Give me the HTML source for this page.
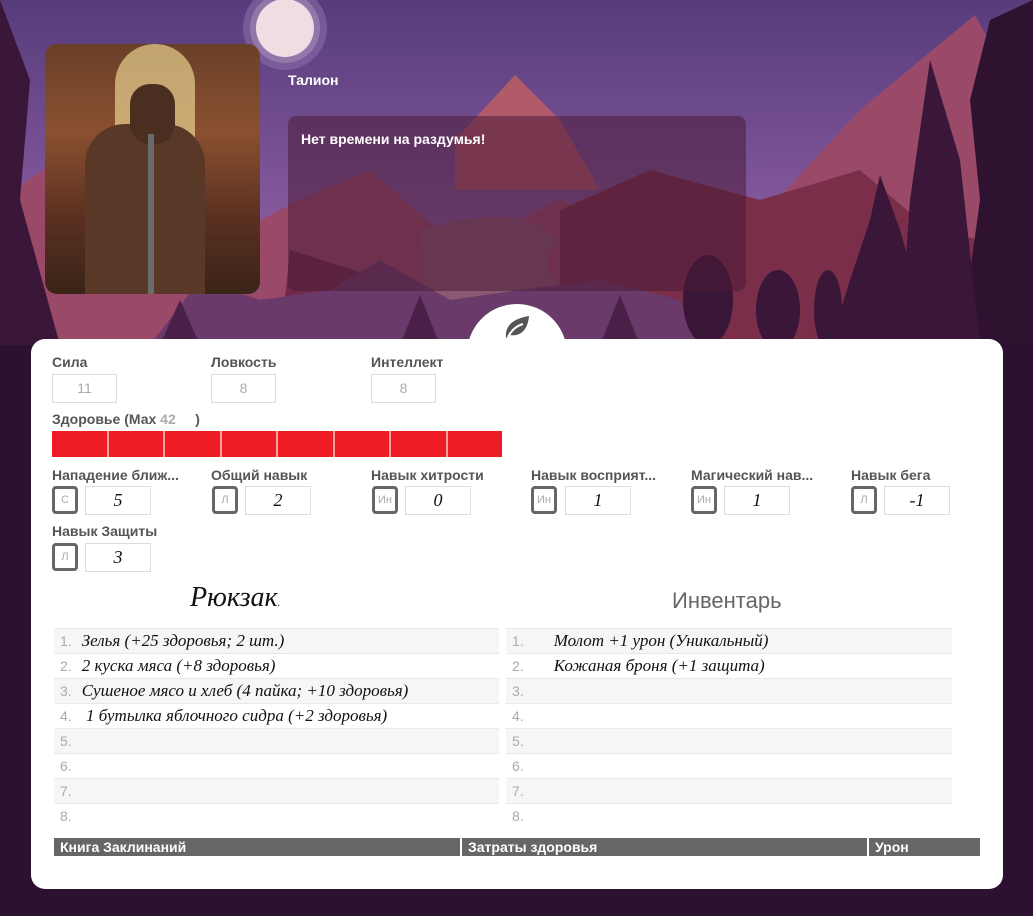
<!DOCTYPE html>
<html><head><meta charset="utf-8">
<style>
*{margin:0;padding:0;box-sizing:border-box}
body{width:1033px;height:916px;overflow:hidden;background:#2d1130;font-family:"Liberation Sans",sans-serif;position:relative}
.bg{position:absolute;left:0;top:0}
.abs{position:absolute}
.portrait{left:45px;top:44px;width:215px;height:250px;border-radius:12px;overflow:hidden;background:linear-gradient(180deg,#6a4028 0%,#8a5030 35%,#5a3020 70%,#3a2418 100%)}
.name{left:288px;top:72px;color:#fff;font-size:14px;font-weight:bold}
.quote{left:288px;top:116px;width:458px;height:175px;border-radius:8px;background:rgba(75,28,55,0.55);color:#fff;font-size:14px;font-weight:bold;padding:15px 13px}
.card{left:31px;top:339px;width:972px;height:550px;background:#fff;border-radius:14px}
.bump{left:467px;top:304px;width:100px;height:60px;background:#fff;border-radius:50px 50px 0 0}
.lbl{position:absolute;font-size:14px;font-weight:bold;color:#555;white-space:nowrap}
.sbox{position:absolute;width:65px;height:29px;border:1px solid #ddd;color:#aaa;font-size:14px;text-align:center;line-height:27px}
.mod{position:absolute;width:26px;height:28px;border:3px solid #666;border-radius:4px;color:#aaa;font-size:11px;text-align:center;line-height:22px}
.val{position:absolute;width:66px;height:29px;border:1px solid #ddd;font-family:"Liberation Serif",serif;font-style:italic;font-size:18px;text-align:center;line-height:27px;color:#111}
.bar{left:52px;top:431px;width:450px;height:26px;display:flex;background:#f4a0a0}
.bar div{flex:1;background:#ed1c24;margin-right:2px}
.bar div:last-child{margin-right:0}
.row{position:absolute;height:25px;border-top:1px solid #e8e8e8;font-size:14px;color:#aaa;line-height:24px;padding-left:6px}
.row i{font-family:"Liberation Serif",serif;color:#111;font-size:17px;margin-left:10px}
.alt{background:#f6f6f6}
.sp{position:absolute;top:838px;height:18px;background:#666;color:#fff;font-weight:bold;font-size:14px;line-height:18px;padding-left:6px}
</style></head><body>
<svg class="bg" width="1033" height="916" viewBox="0 0 1033 916">
<defs><linearGradient id="sky" x1="0" y1="0" x2="0" y2="1"><stop offset="0" stop-color="#563c7c"/><stop offset="0.7" stop-color="#8a5ca0"/><stop offset="1" stop-color="#a06090"/></linearGradient></defs>
<rect width="1033" height="345" fill="url(#sky)"/>
<circle cx="285" cy="28" r="42" fill="#8a6aa8" opacity="0.6"/>
<circle cx="285" cy="28" r="35" fill="#a48ab8" opacity="0.6"/>
<circle cx="285" cy="28" r="29" fill="#eedde2"/>
<polygon points="455,140 515,75 560,120 600,190 455,190" fill="#b05a6a"/>
<polygon points="0,200 50,165 120,210 200,250 300,200 370,170 460,250 560,200 640,230 740,240 860,110 975,15 1033,120 1033,345 0,345" fill="#9a4a68"/>
<polygon points="560,210 650,170 760,200 860,170 930,230 1033,250 1033,345 560,345" fill="#7a2e4a"/>
<polygon points="290,250 480,310 400,345 280,345" fill="#6e2a48"/>
<path d="M420 230 Q520 200 560 240 Q520 280 600 300 L560 345 L430 345 Z" fill="#8a5870"/>
<polygon points="150,345 200,280 260,300 330,290 380,260 450,300 520,290 600,280 680,300 700,345" fill="#6a3a6a"/>
<polygon points="0,0 30,80 20,200 60,345 0,345" fill="#3a1638"/>
<polygon points="990,20 1033,0 1033,345 960,345 980,200 970,100" fill="#2e1230"/>
<polygon points="880,175 900,230 920,300 930,345 830,345 850,280 870,220" fill="#3a1638"/>
<polygon points="930,60 960,160 980,345 900,345 910,200" fill="#3a1638"/>
<ellipse cx="708" cy="300" rx="25" ry="45" fill="#3a1638"/>
<ellipse cx="778" cy="310" rx="22" ry="40" fill="#3a1638"/>
<ellipse cx="828" cy="310" rx="14" ry="40" fill="#3a1638"/>
<polygon points="160,345 180,300 200,345" fill="#4a2048"/>
<polygon points="400,345 420,295 440,345" fill="#4a2048"/>
<polygon points="600,345 620,295 640,345" fill="#4a2048"/>
</svg>
<div class="abs portrait">
<div class="abs" style="left:70px;top:0;width:80px;height:120px;border-radius:40px 40px 0 0;background:#e8d090;opacity:.7"></div>
<div class="abs" style="left:40px;top:80px;width:120px;height:170px;background:#5a3828;border-radius:40px 40px 0 0"></div>
<div class="abs" style="left:85px;top:40px;width:45px;height:60px;background:#4a2e20;border-radius:20px"></div>
<div class="abs" style="left:103px;top:90px;width:6px;height:160px;background:#6a6a6a"></div>
</div>
<div class="abs name">Талион</div>
<div class="abs quote">Нет времени на раздумья!</div>
<div class="abs card"></div>
<div class="abs bump"></div>
<svg class="abs" style="left:503px;top:313px" width="28" height="28" viewBox="0 0 28 28"><path d="M3 25 C2 14 8 6 26 3 C25 16 18 24 7 22 Z" fill="#555"/><path d="M5 24 Q10 14 20 11" stroke="#fff" stroke-width="2" fill="none"/></svg>

<div class="lbl" style="left:52px;top:354px">Сила</div>
<div class="lbl" style="left:211px;top:354px">Ловкость</div>
<div class="lbl" style="left:371px;top:354px">Интеллект</div>
<div class="sbox" style="left:52px;top:374px">11</div>
<div class="sbox" style="left:211px;top:374px">8</div>
<div class="sbox" style="left:371px;top:374px">8</div>
<div class="lbl" style="left:52px;top:411px">Здоровье (Мах <span style="color:#aaa">42</span> &nbsp;&nbsp;&nbsp;&nbsp;)</div>
<div class="abs bar"><div></div><div></div><div></div><div></div><div></div><div></div><div></div><div></div></div>

<div class="lbl" style="left:52px;top:467px">Нападение ближ...</div>
<div class="lbl" style="left:211px;top:467px">Общий навык</div>
<div class="lbl" style="left:371px;top:467px">Навык хитрости</div>
<div class="lbl" style="left:531px;top:467px">Навык восприят...</div>
<div class="lbl" style="left:691px;top:467px">Магический нав...</div>
<div class="lbl" style="left:851px;top:467px">Навык бега</div>
<div class="mod" style="left:52px;top:486px">С</div><div class="val" style="left:85px;top:486px">5</div>
<div class="mod" style="left:212px;top:486px">Л</div><div class="val" style="left:245px;top:486px">2</div>
<div class="mod" style="left:372px;top:486px">Ин</div><div class="val" style="left:405px;top:486px">0</div>
<div class="mod" style="left:531px;top:486px">Ин</div><div class="val" style="left:565px;top:486px">1</div>
<div class="mod" style="left:691px;top:486px">Ин</div><div class="val" style="left:724px;top:486px">1</div>
<div class="mod" style="left:851px;top:486px">Л</div><div class="val" style="left:884px;top:486px">-1</div>
<div class="lbl" style="left:52px;top:523px">Навык Защиты</div>
<div class="mod" style="left:52px;top:543px">Л</div><div class="val" style="left:85px;top:543px">3</div>

<div class="abs" style="left:190px;top:582px;font-family:'Liberation Serif',serif;font-style:italic;font-size:28px;color:#111">Рюкзак<span style="font-size:10px">.</span></div>
<div class="abs" style="left:672px;top:588px;font-size:22px;color:#666">Инвентарь</div>

<div class="row alt" style="left:54px;top:628px;width:445px">1.<i>Зелья (+25 здоровья; 2 шт.)</i></div>
<div class="row" style="left:54px;top:653px;width:445px">2.<i>2 куска мяса (+8 здоровья)</i></div>
<div class="row alt" style="left:54px;top:678px;width:445px">3.<i>Сушеное мясо и хлеб (4 пайка; +10 здоровья)</i></div>
<div class="row" style="left:54px;top:703px;width:445px">4.<i>&nbsp;1 бутылка яблочного сидра (+2 здоровья)</i></div>
<div class="row alt" style="left:54px;top:728px;width:445px">5.</div>
<div class="row" style="left:54px;top:753px;width:445px">6.</div>
<div class="row alt" style="left:54px;top:778px;width:445px">7.</div>
<div class="row" style="left:54px;top:803px;width:445px">8.</div>

<div class="row alt" style="left:506px;top:628px;width:446px">1.<i style="margin-left:30px">Молот +1 урон (Уникальный)</i></div>
<div class="row" style="left:506px;top:653px;width:446px">2.<i style="margin-left:30px">Кожаная броня (+1 защита)</i></div>
<div class="row alt" style="left:506px;top:678px;width:446px">3.</div>
<div class="row" style="left:506px;top:703px;width:446px">4.</div>
<div class="row alt" style="left:506px;top:728px;width:446px">5.</div>
<div class="row" style="left:506px;top:753px;width:446px">6.</div>
<div class="row alt" style="left:506px;top:778px;width:446px">7.</div>
<div class="row" style="left:506px;top:803px;width:446px">8.</div>

<div class="sp" style="left:54px;width:406px">Книга Заклинаний</div>
<div class="sp" style="left:462px;width:405px">Затраты здоровья</div>
<div class="sp" style="left:869px;width:111px">Урон</div>
</body></html>
